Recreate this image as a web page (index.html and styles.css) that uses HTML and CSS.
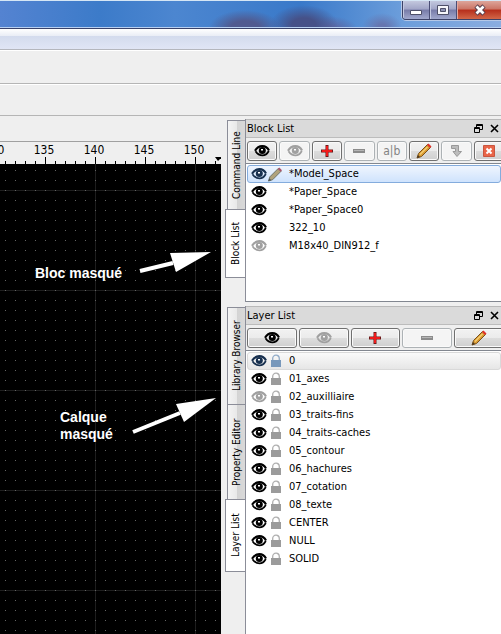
FILE: index.html
```html
<!DOCTYPE html>
<html lang="en">
<head>
  <meta charset="UTF-8">
  <meta name="viewport" content="width=device-width, initial-scale=1.0">
  <title>Drawing</title>
  <link rel="stylesheet" href="styles.css">
</head>
<body>
  <!-- Shared icons -->
  <svg class="symbols" aria-hidden="true">
    <symbol id="eye" viewBox="0 0 16 12">
      <path d="M1 5.800C3 2.400 5.500 1.200 8.300 1.200c3 0 5.300 1.600 6.700 4.300" fill="none" stroke="currentColor" stroke-width="2.200"/>
      <path d="M1.500 6.200c2 3 4.400 4.200 7 4.200s4.600-1.400 6.300-4.400" fill="none" stroke="currentColor" stroke-width="1.800"/>
      <circle cx="8.300" cy="5.600" r="3.500" fill="currentColor"/>
      <path d="M7 4h2v1.500H7z" fill="#fff"/>
    </symbol>
    <symbol id="lock" viewBox="0 0 10 14">
      <path d="M1.700 7V4.500a3.300 3.300 0 0 1 6.600 0V7" fill="none" stroke="currentColor" stroke-width="1.300" opacity="0.8"/>
      <path d="M0 6h10v7H0z" fill="currentColor"/>
    </symbol>
    <symbol id="plus" viewBox="0 0 14 14">
      <path d="M5.500 1h3v4.500H13v3H8.500V13h-3V8.500H1v-3h4.500z" fill="#6d1717"/>
      <path d="M6 2h2v4h4v2H8v4H6V8H2V6h4z" fill="#ee1b1b"/>
    </symbol>
    <symbol id="minus" viewBox="0 0 14 14">
      <path d="M1 5h12v4H1z" fill="#8b8b8b"/>
      <path d="M2 6h10v1H2z" fill="#b5b5b5"/>
    </symbol>
    <symbol id="pencil" viewBox="0 0 16 16">
      <path d="M1 15l1.500-4.500L11.500 1.500l3 3L5.500 13.500z" fill="#d99a31" stroke="#79501c" stroke-width="1"/>
      <path d="M4 11.500L11.500 4" stroke="#f7d077" stroke-width="1.200"/>
      <path d="M1 15l1-3 2 2z" fill="#4b3a22"/>
      <path d="M11 2l1.500-1.500 3 3L14 5z" fill="#df302b"/>
    </symbol>
    <symbol id="pencil-dim" viewBox="0 0 16 16">
      <path d="M1 15l1.500-4.500L11.500 1.500l3 3L5.500 13.500z" fill="#b0a37c" stroke="#69716a" stroke-width="1"/>
      <path d="M1 15l1-3 2 2z" fill="#4b4e50"/>
      <path d="M11 2l1.500-1.500 3 3L14 5z" fill="#a9566c"/>
    </symbol>
    <symbol id="float" viewBox="0 0 9 9">
      <path d="M2.500 3V.500h6v5H6M2 1.500h7M.500 3.500h5v5h-5zM0 4.500h6" fill="none" stroke="#000"/>
    </symbol>
    <symbol id="close" viewBox="0 0 9 9">
      <path d="M1 1l7 7M8 1L1 8" fill="none" stroke="#000" stroke-width="1.600"/>
    </symbol>
  </svg>

  <header class="titlebar">
    <div class="window-buttons">
      <button type="button" class="window-button" aria-label="Minimize">
        <svg width="14" height="12" viewBox="0 0 14 12"><path d="M1.500 6.500h11v4h-11z" fill="#fff" stroke="#4e5068"/></svg>
      </button>
      <button type="button" class="window-button" aria-label="Maximize">
        <svg width="14" height="12" viewBox="0 0 14 12"><path d="M1.500 1.500h11v9h-11z" fill="#f6f6fa" stroke="#4e5068"/><path d="M4.500 4.500h5v3h-5z" fill="#8f92b4" stroke="#4e5068"/></svg>
      </button>
      <button type="button" class="window-button window-close" aria-label="Close">
        <svg width="14" height="12" viewBox="0 0 14 12"><path d="M3 2l8 8M11 2l-8 8" stroke="#573d4c" stroke-width="4.600"/><path d="M3.500 2.500l7 7M10.500 2.500l-7 7" stroke="#fff" stroke-width="2.800"/></svg>
      </button>
    </div>
  </header>
  <div class="menubar"></div>
  <div class="toolbar"></div>
  <div class="toolbar toolbar-last"></div>

  <main class="workspace">
    <section class="drawing">
      <div class="ruler">
        <span>130</span>
        <span>135</span>
        <span>140</span>
        <span>145</span>
        <span>150</span>
        <svg class="ruler-marker" width="6" height="4" viewBox="0 0 6 4"><path d="M0 0h6v2H5L3 4z"/></svg>
      </div>
      <div class="canvas">
        <svg class="grid" width="100%" height="100%">
          <defs>
            <pattern id="dots" x="5" y="6" width="10" height="10" patternUnits="userSpaceOnUse">
              <path d="M0 0h1v1H0z" fill="#636363"/>
            </pattern>
            <pattern id="lines" x="95" y="26" width="100" height="100" patternUnits="userSpaceOnUse">
              <path d="M0 0h100v1H0zM0 0h1v100H0z" fill="#1e1e1e"/>
            </pattern>
          </defs>
          <rect width="100%" height="100%" fill="url(#lines)"/>
          <rect width="100%" height="100%" fill="url(#dots)"/>
          <g fill="#fff" stroke="#fff">
            <path d="M140 107l33-8" stroke-width="4"/>
            <path d="M170 89l41-1-35 20z" stroke="none"/>
            <path d="M133 268l47-19" stroke-width="4"/>
            <path d="M176 240l40-6-32 24z" stroke="none"/>
          </g>
        </svg>
        <p class="note note-block">Bloc masqué</p>
        <p class="note note-layer">Calque<br>masqué</p>
      </div>
    </section>

    <aside class="docks">
      <section class="dock-area">
        <nav class="tabs">
          <button type="button" class="tab tab-command">Command Line</button>
          <button type="button" class="tab tab-block active">Block List</button>
        </nav>
        <div class="dock">
          <div class="dock-title">
            <h2>Block List</h2>
            <button type="button" aria-label="Float"><svg width="9" height="9"><use href="#float"/></svg></button>
            <button type="button" aria-label="Close"><svg width="9" height="9"><use href="#close"/></svg></button>
          </div>
          <div class="tools">
            <button type="button" aria-label="Show all"><svg width="16" height="12"><use href="#eye"/></svg></button>
            <button type="button" class="off dim" aria-label="Hide all"><svg width="16" height="12"><use href="#eye"/></svg></button>
            <button type="button" aria-label="Add block"><svg width="14" height="14"><use href="#plus"/></svg></button>
            <button type="button" class="off" aria-label="Remove block"><svg width="14" height="14"><use href="#minus"/></svg></button>
            <button type="button" class="off">a|b</button>
            <button type="button" aria-label="Edit block"><svg width="16" height="16"><use href="#pencil"/></svg></button>
            <button type="button" class="off" aria-label="Insert block">
              <svg width="14" height="14" viewBox="0 0 14 14"><path d="M2.500 1.500h7v6h3L8 12.500 4 7.500h2.500v-3h-4z" fill="#bcbcbc" stroke="#999" stroke-width="1"/></svg>
            </button>
            <button type="button" aria-label="Quit editing">
              <svg width="12" height="12" viewBox="0 0 12 12"><path d="M.500.500h11v11H.500z" fill="#e96548" stroke="#c8553f"/><path d="M3.500 3.500l5 5M8.500 3.500l-5 5" stroke="#fff" stroke-width="2"/></svg>
            </button>
          </div>
          <ul class="list block-list">
            <li class="selected"><svg class="eye" width="16" height="12"><use href="#eye"/></svg><svg class="mark" width="15" height="15"><use href="#pencil-dim"/></svg><span>*Model_Space</span></li>
            <li><svg class="eye" width="16" height="12"><use href="#eye"/></svg><i class="mark"></i><span>*Paper_Space</span></li>
            <li><svg class="eye" width="16" height="12"><use href="#eye"/></svg><i class="mark"></i><span>*Paper_Space0</span></li>
            <li><svg class="eye" width="16" height="12"><use href="#eye"/></svg><i class="mark"></i><span>322_10</span></li>
            <li><svg class="eye dim" width="16" height="12"><use href="#eye"/></svg><i class="mark"></i><span>M18x40_DIN912_f</span></li>
          </ul>
        </div>
      </section>

      <section class="dock-area dock-area-layers">
        <nav class="tabs">
          <button type="button" class="tab tab-library">Library Browser</button>
          <button type="button" class="tab tab-property">Property Editor</button>
          <button type="button" class="tab tab-layer active">Layer List</button>
        </nav>
        <div class="dock">
          <div class="dock-title">
            <h2>Layer List</h2>
            <button type="button" aria-label="Float"><svg width="9" height="9"><use href="#float"/></svg></button>
            <button type="button" aria-label="Close"><svg width="9" height="9"><use href="#close"/></svg></button>
          </div>
          <div class="tools">
            <button type="button" aria-label="Show all"><svg width="16" height="12"><use href="#eye"/></svg></button>
            <button type="button" class="dim" aria-label="Hide all"><svg width="16" height="12"><use href="#eye"/></svg></button>
            <button type="button" aria-label="Add layer"><svg width="14" height="14"><use href="#plus"/></svg></button>
            <button type="button" class="off" aria-label="Remove layer"><svg width="14" height="14"><use href="#minus"/></svg></button>
            <button type="button" aria-label="Edit layer"><svg width="16" height="16"><use href="#pencil"/></svg></button>
          </div>
          <ul class="list layer-list">
            <li class="current"><svg class="eye" width="16" height="12"><use href="#eye"/></svg><svg class="mark lock" width="10" height="14"><use href="#lock"/></svg><span>0</span></li>
            <li><svg class="eye" width="16" height="12"><use href="#eye"/></svg><svg class="mark lock" width="10" height="14"><use href="#lock"/></svg><span>01_axes</span></li>
            <li><svg class="eye dim" width="16" height="12"><use href="#eye"/></svg><svg class="mark lock" width="10" height="14"><use href="#lock"/></svg><span>02_auxilliaire</span></li>
            <li><svg class="eye" width="16" height="12"><use href="#eye"/></svg><svg class="mark lock" width="10" height="14"><use href="#lock"/></svg><span>03_traits-fins</span></li>
            <li><svg class="eye" width="16" height="12"><use href="#eye"/></svg><svg class="mark lock" width="10" height="14"><use href="#lock"/></svg><span>04_traits-caches</span></li>
            <li><svg class="eye" width="16" height="12"><use href="#eye"/></svg><svg class="mark lock" width="10" height="14"><use href="#lock"/></svg><span>05_contour</span></li>
            <li><svg class="eye" width="16" height="12"><use href="#eye"/></svg><svg class="mark lock" width="10" height="14"><use href="#lock"/></svg><span>06_hachures</span></li>
            <li><svg class="eye" width="16" height="12"><use href="#eye"/></svg><svg class="mark lock" width="10" height="14"><use href="#lock"/></svg><span>07_cotation</span></li>
            <li><svg class="eye" width="16" height="12"><use href="#eye"/></svg><svg class="mark lock" width="10" height="14"><use href="#lock"/></svg><span>08_texte</span></li>
            <li><svg class="eye" width="16" height="12"><use href="#eye"/></svg><svg class="mark lock" width="10" height="14"><use href="#lock"/></svg><span>CENTER</span></li>
            <li><svg class="eye" width="16" height="12"><use href="#eye"/></svg><svg class="mark lock" width="10" height="14"><use href="#lock"/></svg><span>NULL</span></li>
            <li><svg class="eye" width="16" height="12"><use href="#eye"/></svg><svg class="mark lock" width="10" height="14"><use href="#lock"/></svg><span>SOLID</span></li>
          </ul>
        </div>
      </section>
    </aside>
  </main>
</body>
</html>
```
FILE: styles.css
```css
* {
  box-sizing: border-box;
}

body {
  margin: 0;
  min-height: 100vh;
  display: flex;
  flex-direction: column;
  overflow: hidden;
  background: #efefef;
  color: #000;
  font-family: "DejaVu Sans Condensed", "DejaVu Sans", sans-serif;
  font-size: 11px;
}

button {
  padding: 0;
  font-family: inherit;
  color: inherit;
}

svg {
  display: block;
  flex: none;
}

.symbols {
  position: absolute;
  width: 0;
  height: 0;
}

/* Window frame */
.titlebar {
  display: flex;
  justify-content: flex-end;
  height: 29px;
  overflow: hidden;
  border-top: 1px solid #d5e6f5;
  border-bottom: 1px solid #39426a;
  box-shadow: inset 0 -1px #b8d0f2;
  background:
    radial-gradient(ellipse 36px 18px at 245px 27px, #505a90 40%, transparent),
    radial-gradient(ellipse 34px 20px at 304px 24px, #465188 35%, transparent),
    radial-gradient(ellipse 28px 14px at 330px 29px, #5a6aa8 30%, transparent),
    radial-gradient(ellipse 20px 14px at 382px 26px, #6676b0 20%, transparent),
    linear-gradient(90deg, #5483d1, #3c7bc9 20%, #4c86d0 35%, #3979c9 60%, #6b9ddb 80%, #8bade0);
}

.window-buttons {
  display: flex;
  height: 19px;
  margin-right: -3px;
  border: 1px solid #3c4267;
  border-top: 0;
  border-radius: 0 0 0 4px;
  box-shadow: 0 0 0 1px #b5c8e8;
  overflow: hidden;
}

.window-button {
  display: flex;
  justify-content: center;
  align-items: center;
  width: 27px;
  border: 0;
  border-right: 1px solid #4a4e76;
  box-shadow: inset 1px 0 #c4c9e1;
  background: linear-gradient(#c3c8de, #a1a5c7 45%, #777ba8 50%, #a1a8cd);
}

.window-close {
  width: 46px;
  border-right: 0;
  box-shadow: inset 1px 0 #e3a89f;
  background: linear-gradient(#dda59b, #cb7465 45%, #b62e1b 50%, #d26748);
}

.menubar {
  height: 21px;
  border-bottom: 1px solid #b4b6bd;
  background: linear-gradient(#fff, #e9edf5 7px, #d3dbed 7px, #e0e5f5);
}

.toolbar {
  height: 34px;
  border-top: 1px solid #fff;
  border-bottom: 1px solid #b5b5b5;
}

.toolbar-last {
  height: 32px;
}

.workspace {
  flex: 1;
  display: flex;
}

/* Drawing area */
.drawing {
  flex: 1;
  min-width: 0;
  display: flex;
  flex-direction: column;
  padding-top: 25px;
}

.ruler {
  position: relative;
  display: flex;
  height: 23px;
  padding-top: 1px;
  overflow: hidden;
  border-top: 1px solid #a0a0a0;
  background:
    repeating-linear-gradient(90deg, #000 0 1px, transparent 1px 50px) 45px 100% / 100% 7px no-repeat,
    repeating-linear-gradient(90deg, #000 0 1px, transparent 1px 10px) 5px 100% / 100% 3px no-repeat;
}

.ruler span {
  flex: none;
  width: 50px;
  font-size: 12px;
  line-height: 14px;
  text-align: center;
}

.ruler span:first-child {
  margin-left: -31px;
}

.ruler-marker {
  position: absolute;
  right: 0;
  bottom: 3px;
}

.canvas {
  position: relative;
  flex: 1;
  background: #000;
}

.grid {
  position: absolute;
  inset: 0;
}

.note {
  position: absolute;
  margin: 0;
  color: #fff;
  font: bold 14px/17px "Liberation Sans", Arial, sans-serif;
}

.note-block {
  left: 35px;
  top: 101px;
}

.note-layer {
  left: 60px;
  top: 245px;
}

/* Docks */
.docks {
  width: 280px;
  display: flex;
  flex-direction: column;
  gap: 4px;
  padding-top: 3px;
}

.dock-area {
  display: flex;
}

.dock-area-layers {
  flex: 1;
}

.tabs {
  display: flex;
  flex-direction: column;
  align-items: flex-end;
  width: 24px;
  padding-top: 1px;
}

.tab {
  width: 18px;
  border: 1px solid #8b8d98;
  border-left: 0;
  border-top: 0;
  background: linear-gradient(270deg, #f4f4f4, #e9e9e9 50%, #d3d3d3 52%, #d9d9d9);
  font-size: 10px;
  writing-mode: vertical-rl;
  transform: rotate(180deg);
}

.tab.active {
  width: 20px;
  border-top: 1px solid #8b8d98;
  background: #fff;
}

.tab-command {
  height: 89px;
}

.tab-block {
  height: 69px;
}

.tab-library {
  height: 97px;
}

.tab-property {
  height: 95px;
}

.tab-layer {
  height: 73px;
}

.dock {
  flex: 1;
  min-width: 0;
  display: flex;
  flex-direction: column;
  overflow: hidden;
  border-left: 1px solid #8b8d98;
}

.dock-title {
  display: flex;
  align-items: center;
  gap: 7px;
  height: 19px;
  padding-right: 2px;
  border-top: 1px solid #b9b9b9;
  border-bottom: 1px solid #bcbcbc;
  background: #dadada;
}

.dock-title h2 {
  flex: 1;
  margin: 0 0 0 1px;
  font-size: 11px;
  font-weight: normal;
  line-height: 17px;
}

.dock-title button {
  border: 0;
  background: none;
}

.tools {
  display: flex;
  gap: 2px;
  height: 25px;
  margin-right: -3px;
  padding: 3px 0 2px 1px;
}

.tools button {
  flex: 1 1 0;
  min-width: 0;
  display: flex;
  justify-content: center;
  align-items: center;
  border: 1px solid #707070;
  border-radius: 3px;
  box-shadow: inset 0 0 0 1px #fafafa;
  background: linear-gradient(#f2f2f2, #ebebeb 50%, #dddddd 50%, #cfcfcf);
}

.tools .off {
  border-color: #adb2b5;
  background: #f4f4f4;
  color: #838383;
  font-size: 12px;
}

.tools .dim,
.dim {
  color: #a0a0a0;
}

.list {
  margin: 0;
  padding: 0;
  list-style: none;
  border-top: 1px solid #828790;
  background: #fff;
}

.block-list {
  height: 139px;
  padding-top: 1px;
  border-bottom: 1px solid #828790;
}

.layer-list {
  flex: 1;
  padding-top: 1px;
}

.list li {
  display: flex;
  align-items: center;
  height: 18px;
  margin-left: 1px;
  padding-left: 3px;
  border: 1px solid transparent;
  border-radius: 3px;
  line-height: 16px;
  white-space: nowrap;
}

.mark {
  flex: none;
  width: 16px;
}

.list li span {
  margin-left: 6px;
}

.list .lock {
  width: 10px;
  margin: 0 2px 0 4px;
  color: #9b9b9b;
}

.list .selected {
  border-color: #84acdd;
  background: linear-gradient(#eff5fe, #cfe3fd);
}

.selected .eye,
.current .eye {
  color: #17304f;
}

.list .current {
  border-color: #d9d9d9;
  background: linear-gradient(#fafafa, #e6e6e6);
}

.list .current .lock {
  color: #7898bb;
}
```
